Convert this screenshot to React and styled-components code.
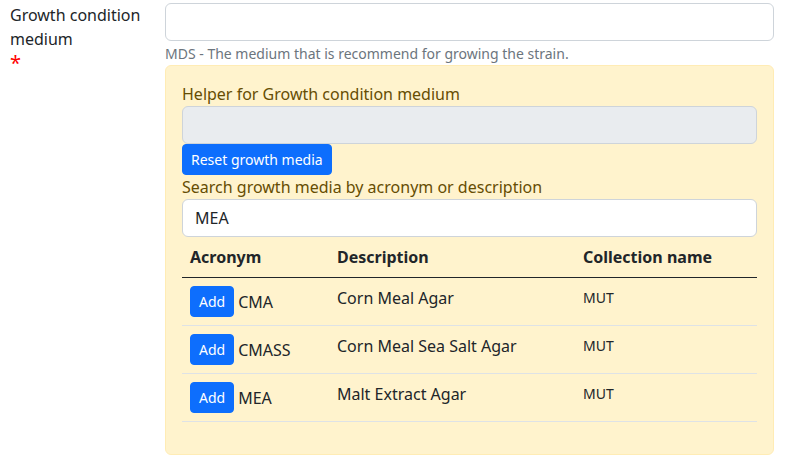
import React from "react";
import styled, { createGlobalStyle } from "styled-components";

const GlobalStyle = createGlobalStyle`
    body {
        margin: 0;
        background: #fff;
        font-family: "Noto Sans", "Liberation Sans", sans-serif;
        font-size: 16px;
        line-height: 1.5;
        color: #212529;
    }
    * {
        box-sizing: border-box;
    }
`;

const FormRow = styled.div`
    display: flex;
    padding-top: 3px;
    width: 789px;
`;

const LabelCol = styled.label`
    width: 165px;
    padding-left: 10px;
    padding-right: 15px;
    line-height: 24px;
`;

const Required = styled.span`
    display: block;
    color: #ff0000;
    font-size: 20px;
    line-height: 24px;
`;

const FieldCol = styled.div`
    width: 609px;
`;

const TextInput = styled.input`
    display: block;
    width: 100%;
    height: 38px;
    padding: 6px 12px;
    font: inherit;
    font-size: 16px;
    color: #212529;
    background: ${(p) => (p.disabled ? "#e9ecef" : "#fff")};
    border: 1px solid #ced4da;
    border-radius: 6px;
    outline: none;
`;

const HelpText = styled.div`
    margin-top: 2px;
    font-size: 14px;
    line-height: 21px;
    color: #6c757d;
`;

const HelperBox = styled.div`
    margin-top: 1px;
    padding: 16px;
    background: #fff3cd;
    border: 1px solid #ffecb5;
    border-radius: 6px;
    color: #664d03;
`;

const HelperLabel = styled.div`
    line-height: 24px;
`;

const Button = styled.button`
    display: inline-block;
    height: 31px;
    padding: 0 8px;
    font-family: inherit;
    font-size: 14px;
    line-height: 21px;
    color: #fff;
    background: #0d6efd;
    border: 1px solid #0d6efd;
    border-radius: 4px;
`;

const Table = styled.table`
    width: 100%;
    border-collapse: collapse;
    margin-bottom: 16px;
    color: #212529;
`;

const Th = styled.th`
    text-align: left;
    font-weight: 700;
    padding: 8px;
    line-height: 24px;
    width: ${(p) => (p.$w ? `${p.$w}px` : "auto")};
    border-bottom: 1px solid #212529;
`;

const Td = styled.td`
    padding: 8px;
    vertical-align: top;
    line-height: 24px;
    font-size: ${(p) => (p.$small ? "14px" : "16px")};
    border-bottom: 1px solid #dee2e6;
`;

const AcronymCell = styled.div`
    display: flex;
    align-items: center;
    gap: 4px;
    height: 31px;
`;

const media = [
    { acronym: "CMA", description: "Corn Meal Agar", collection: "MUT" },
    { acronym: "CMASS", description: "Corn Meal Sea Salt Agar", collection: "MUT" },
    { acronym: "MEA", description: "Malt Extract Agar", collection: "MUT" },
];

function App() {
    return (
        <>
            <GlobalStyle />
            <FormRow>
                <LabelCol>
                    Growth condition medium
                    <Required>*</Required>
                </LabelCol>
                <FieldCol>
                    <TextInput type="text" />
                    <HelpText>MDS - The medium that is recommend for growing the strain.</HelpText>
                    <HelperBox>
                        <HelperLabel>Helper for Growth condition medium</HelperLabel>
                        <TextInput type="text" disabled />
                        <Button>Reset growth media</Button>
                        <HelperLabel>Search growth media by acronym or description</HelperLabel>
                        <TextInput type="text" defaultValue="MEA" />
                        <Table>
                            <thead>
                                <tr>
                                    <Th $w={147}>Acronym</Th>
                                    <Th $w={246}>Description</Th>
                                    <Th>Collection name</Th>
                                </tr>
                            </thead>
                            <tbody>
                                {media.map((m) => (
                                    <tr key={m.acronym}>
                                        <Td>
                                            <AcronymCell>
                                                <Button>Add</Button>
                                                {m.acronym}
                                            </AcronymCell>
                                        </Td>
                                        <Td>{m.description}</Td>
                                        <Td $small>{m.collection}</Td>
                                    </tr>
                                ))}
                            </tbody>
                        </Table>
                    </HelperBox>
                </FieldCol>
            </FormRow>
        </>
    );
}

export default App;
